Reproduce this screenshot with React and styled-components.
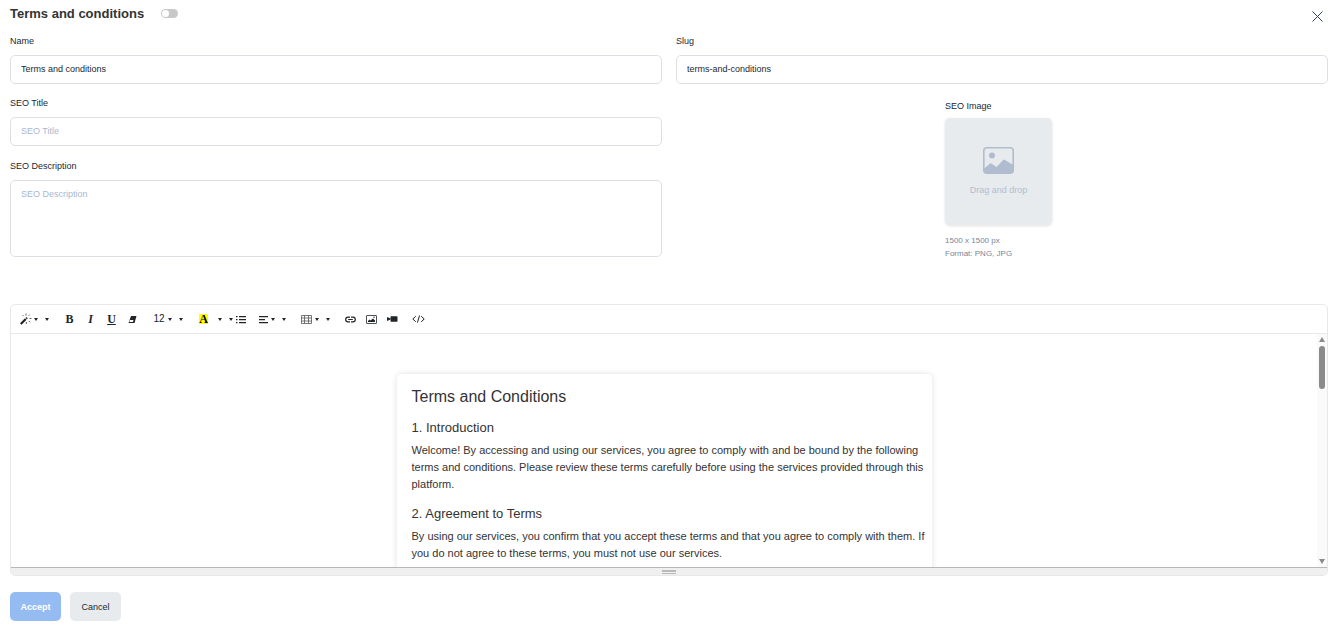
import React, {useState} from 'react';
import styled, {createGlobalStyle, css} from 'styled-components';

const GlobalStyle = createGlobalStyle`
  * {
    box-sizing: border-box;
  }
  body {
    margin: 0;
    background: #fff;
    color: #212832;
    font-family: 'Liberation Sans', Arial, sans-serif;
    font-size: 9px;
    line-height: 14px;
  }
  button,
  input,
  textarea {
    font: inherit;
    color: inherit;
    margin: 0;
  }
`;

const Page = styled.form`
  padding: 4px 8px 4px 10px;
`;

const Header = styled.header`
  display: flex;
  align-items: flex-start;
  height: 30px;
`;

const Title = styled.h1`
  margin: 0 17px 0 0;
  font-size: 13px;
  line-height: 20px;
  color: #333;
`;

const Switch = styled.input`
  appearance: none;
  width: 17px;
  height: 9px;
  margin: 5px auto 0 0;
  border-radius: 5px;
  background: #c8c8c8;
  cursor: pointer;

  &::before {
    content: '';
    display: block;
    width: 7px;
    height: 7px;
    margin: 1px;
    border-radius: 50%;
    background: #fff;
  }
  &:checked {
    background: #94bdf2;
  }
  &:checked::before {
    margin-left: 9px;
  }
`;

const CloseButton = styled.button`
  display: flex;
  padding: 5px;
  margin-top: 2px;
  border: 0;
  background: none;
  color: #34405a;
  cursor: pointer;
`;

const Columns = styled.div`
  display: grid;
  grid-template-columns: 1fr 1fr;
  column-gap: 14px;
`;

const SeoColumn = styled.div`
  display: grid;
  row-gap: 1px;
`;

const Field = styled.div`
  display: flex;
  flex-direction: column;
  gap: 7px;
  margin-bottom: 12px;
`;

const control = css`
  width: 100%;
  padding: 6px 10px;
  border: 1px solid #dcdfe3;
  border-radius: 5px;
  background: #fff;
  outline: none;

  &::placeholder {
    color: #a9b7cf;
    opacity: 1;
  }
  &:focus {
    border-color: #94bdf2;
  }
`;

const Input = styled.input`
  ${control}
  height: 29px;
  padding: 5px 10px 7px;
`;

const TextArea = styled.textarea`
  ${control}
  display: block;
  height: 77px;
  resize: none;
`;

const ImageColumn = styled.div`
  display: flex;
  flex-direction: column;
  justify-self: center;
  width: 107px;
  margin: 3px 7px 0 0;
`;

const DropZone = styled.button`
  display: flex;
  flex-direction: column;
  align-items: center;
  justify-content: center;
  gap: 9px;
  height: 107px;
  margin: 5px 0 9px;
  border: 0;
  border-radius: 5px;
  background: #e7ebee;
  box-shadow: 0 1px 3px rgba(0, 0, 0, 0.12);
  color: #b0bdd0;
  cursor: pointer;
`;

const Hint = styled.small`
  font-size: 8px;
  line-height: 13px;
  color: #77859b;
`;

const Editor = styled.section`
  margin-top: 35px;
  border: 1px solid #e6e9ec;
  border-radius: 5px;
  overflow: hidden;
`;

const Toolbar = styled.div`
  display: flex;
  align-items: center;
  gap: 6px;
  height: 29px;
  padding: 0 6px;
  border-bottom: 1px solid #e6e9ec;
`;

const Group = styled.div`
  display: flex;
`;

const ToolButton = styled.button`
  display: flex;
  align-items: center;
  justify-content: center;
  gap: 2px;
  height: 20px;
  width: ${(p) => (p.$icon ? '21px' : 'auto')};
  padding: 0 ${(p) => (p.$icon ? 0 : p.$arrow ? 4 : 3)}px;
  border: 0;
  background: none;
  color: #212529;
  cursor: pointer;
`;

const Slot = styled.span`
  display: flex;
  justify-content: center;
  width: ${(p) => p.$width}px;
  font-size: 10px;
`;

const Caret = styled.span`
  border-top: 3px solid #212529;
  border-left: 2px solid transparent;
  border-right: 2px solid transparent;
`;

const Letter = styled.span`
  font-family: 'Liberation Serif', serif;
  font-size: 12px;
  font-weight: 700;
  font-style: ${(p) => (p.$italic ? 'italic' : 'normal')};
  text-decoration: ${(p) => (p.$underline ? 'underline' : 'none')};
`;

const ColorLetter = styled(Letter)`
  width: 9px;
  line-height: 10px;
  background: #ff0;
  color: #000;
`;

const Editing = styled.div`
  display: flex;
  height: 233px;
`;

const Canvas = styled.div`
  flex: 1;
  padding: 40px 10px 0;
  overflow: hidden;
`;

const Sheet = styled.article`
  max-width: 535px;
  min-height: 300px;
  margin: 0 auto;
  padding: 13px 3px 13px 15px;
  border-radius: 5px;
  box-shadow: 0 0 6px rgba(0, 0, 0, 0.12);
  color: #333;

  h2,
  h3,
  p {
    margin: 0;
    font-weight: 400;
  }
  h2 {
    font-size: 16px;
    line-height: 20px;
  }
  h3 {
    margin-top: 12px;
    font-size: 13px;
    line-height: 18px;
  }
  p {
    margin-top: 5px;
    font-size: 11px;
    line-height: 17px;
  }
`;

const ScrollTrack = styled.div`
  display: flex;
  flex-direction: column;
  align-items: center;
  justify-content: space-between;
  width: 10px;
  padding: 3px 0;
  background: #fafafa;
`;

const ScrollThumb = styled.span`
  width: 6px;
  height: 43px;
  margin: 4px 0 auto;
  border-radius: 3px;
  background: #8b8b8b;
`;

const ScrollArrow = styled.span`
  border: 0 solid transparent;
  border-width: 0 3px;
  ${(p) =>
    p.$down
      ? 'border-top: 5px solid #8b8b8b;'
      : 'border-bottom: 5px solid #8b8b8b;'}
`;

const StatusBar = styled.div`
  display: flex;
  flex-direction: column;
  align-items: center;
  gap: 1px;
  height: 8px;
  padding-top: 2px;
  border-top: 1px solid #b5b8ba;
  background: #f0f0f0;
  cursor: ns-resize;
`;

const ResizeLine = styled.span`
  width: 14px;
  height: ${(p) => p.$height}px;
  background: #b9b9b9;
`;

const Actions = styled.footer`
  display: flex;
  gap: 9px;
  margin-top: 16px;
`;

const ActionButton = styled.button`
  width: 51px;
  height: 29px;
  padding: 0;
  border: 0;
  border-radius: 5px;
  background: ${(p) => (p.$primary ? '#95bcf2' : '#e7ebee')};
  color: ${(p) => (p.$primary ? '#fff' : '#212832')};
  font-weight: ${(p) => (p.$primary ? 700 : 400)};
  cursor: pointer;
`;

const CloseIcon = () => (
  <svg width='11' height='11' viewBox='0 0 11 11' stroke='currentColor'>
    <path d='M.5 .5l10 10M10.5 .5l-10 10' />
  </svg>
);

const PictureIcon = () => (
  <svg width='31' height='27' viewBox='0 0 31 27' fill='currentColor'>
    <rect
      x='.8'
      y='.8'
      width='29.4'
      height='25.4'
      rx='3'
      fill='none'
      stroke='currentColor'
      strokeWidth='1.6'
    />
    <circle cx='9' cy='8.5' r='3' />
    <path d='M1 21.500l5.800-4.800q1-.7 2 0l4.700 3.300 6.600-7q.9-.8 1.900 0l8.300 5v5.200q0 3-3 3H4q-3 0-3-3z' />
  </svg>
);

const MagicIcon = () => (
  <svg width='12' height='12' viewBox='0 0 12 12' stroke='currentColor'>
    <path d='M.8 11l5-5' strokeWidth='2.200' />
    <path d='M6.200 5.600l1-1' strokeWidth='1.600' />
    <path
      d='M6 .5v2M2.500 2l1.200 1.200M9.800 1.600L8.600 2.800M9.500 5.500h2M8.800 8l1.300 1.300M6.300 9v2'
      strokeWidth='.7'
    />
  </svg>
);

const EraserIcon = () => (
  <svg width='9' height='9' viewBox='0 0 9 9'>
    <path d='M3 1h5.500L6.500 8H.5z' fill='currentColor' />
    <path d='M1.900 5h3.600l-.6 2H1.300z' fill='#fff' />
  </svg>
);

const ListIcon = () => (
  <svg width='10' height='9' viewBox='0 0 10 9' fill='currentColor'>
    <path d='M0 1h1.500v1.300H0zM3 1h7v1.300H3zM0 4h1.500v1.300H0zM3 4h7v1.300H3zM0 7h1.500v1.300H0zM3 7h7v1.300H3z' />
  </svg>
);

const AlignIcon = () => (
  <svg width='9' height='9' viewBox='0 0 9 9' fill='currentColor'>
    <path d='M0 1h9v1.300H0zM0 4h6v1.300H0zM0 7h9v1.300H0z' />
  </svg>
);

const TableIcon = () => (
  <svg width='11' height='9' viewBox='0 0 11 9' fill='none' stroke='#555'>
    <path d='M.5 .5h10v8H.5zM3.500 .5v8M7.500 .5v8M.5 3h10M.5 6h10' strokeWidth='.8' />
  </svg>
);

const LinkIcon = () => (
  <svg width='11' height='7' viewBox='0 0 11 7' fill='none' stroke='currentColor'>
    <path
      d='M5 1.200H3a2.300 2.300 0 000 4.600h2M6 1.200h2a2.300 2.300 0 010 4.600H6M3.200 3.500h4.600'
      strokeWidth='1.200'
    />
  </svg>
);

const ImageIcon = () => (
  <svg width='11' height='9' viewBox='0 0 11 9' fill='currentColor'>
    <rect x='.5' y='.5' width='10' height='8' rx='.4' fill='none' stroke='currentColor' strokeWidth='.8' />
    <path d='M2 7V6l1.500-1.500 1 1L7 3.500l2 2V7z' />
    <circle cx='8' cy='2.300' r='.7' />
  </svg>
);

const VideoIcon = () => (
  <svg width='11' height='6' viewBox='0 0 11 6' fill='currentColor'>
    <path d='M0 1l3.500 1.500v1L0 5z' />
    <rect x='3.500' y='.3' width='7' height='5.400' rx='.6' />
  </svg>
);

const CodeIcon = () => (
  <svg width='13' height='8' viewBox='0 0 13 8' fill='none' stroke='currentColor'>
    <path d='M3.800 1.200L.8 4l3 2.800M9.200 1.200l3 2.800-3 2.800M7.500 .5l-2 7' />
  </svg>
);

const Tool = ({label, children}) => (
  <ToolButton type='button' aria-label={label} $icon>
    {children}
  </ToolButton>
);

const DropTool = ({label, width, children}) => (
  <ToolButton type='button' aria-label={label}>
    <Slot $width={width}>{children}</Slot>
    <Caret />
  </ToolButton>
);

const ArrowTool = ({label}) => (
  <ToolButton type='button' aria-label={label} $arrow>
    <Caret />
  </ToolButton>
);

const EditorToolbar = () => (
  <Toolbar role='toolbar'>
    <Group>
      <DropTool label='Style' width={12}>
        <MagicIcon />
      </DropTool>
      <ArrowTool label='More styles' />
    </Group>
    <Group>
      <Tool label='Bold'>
        <Letter>B</Letter>
      </Tool>
      <Tool label='Italic'>
        <Letter $italic>I</Letter>
      </Tool>
      <Tool label='Underline'>
        <Letter $underline>U</Letter>
      </Tool>
      <Tool label='Remove font style'>
        <EraserIcon />
      </Tool>
    </Group>
    <Group>
      <DropTool label='Font size' width={14}>
        12
      </DropTool>
      <ArrowTool label='More sizes' />
    </Group>
    <Group>
      <Tool label='Recent color'>
        <ColorLetter>A</ColorLetter>
      </Tool>
      <ArrowTool label='More colors' />
      <ToolButton type='button' aria-label='Unordered list'>
        <Caret />
        <Slot $width={11}>
          <ListIcon />
        </Slot>
      </ToolButton>
    </Group>
    <Group>
      <DropTool label='Paragraph' width={11}>
        <AlignIcon />
      </DropTool>
      <ArrowTool label='More paragraph options' />
    </Group>
    <Group>
      <DropTool label='Table' width={14}>
        <TableIcon />
      </DropTool>
      <ArrowTool label='More table options' />
    </Group>
    <Group>
      <Tool label='Link'>
        <LinkIcon />
      </Tool>
      <Tool label='Picture'>
        <ImageIcon />
      </Tool>
      <Tool label='Video'>
        <VideoIcon />
      </Tool>
    </Group>
    <Group>
      <ToolButton type='button' aria-label='Code view'>
        <CodeIcon />
      </ToolButton>
    </Group>
  </Toolbar>
);

const App = () => {
  const [active, setActive] = useState(false);
  const [data, setData] = useState({
    name: 'Terms and conditions',
    slug: 'terms-and-conditions',
    seoTitle: '',
    seoDescription: '',
  });

  const onChange = (e) => setData({...data, [e.target.name]: e.target.value});

  return (
    <>
      <GlobalStyle />
      <Page onSubmit={(e) => e.preventDefault()}>
        <Header>
          <Title>Terms and conditions</Title>
          <Switch
            type='checkbox'
            role='switch'
            aria-label='Active'
            checked={active}
            onChange={(e) => setActive(e.target.checked)}
          />
          <CloseButton type='button' aria-label='Close'>
            <CloseIcon />
          </CloseButton>
        </Header>

        <Columns>
          <Field>
            <label htmlFor='name'>Name</label>
            <Input id='name' name='name' value={data.name} onChange={onChange} />
          </Field>
          <Field>
            <label htmlFor='slug'>Slug</label>
            <Input id='slug' name='slug' value={data.slug} onChange={onChange} />
          </Field>
          <SeoColumn>
            <Field>
              <label htmlFor='seoTitle'>SEO Title</label>
              <Input
                id='seoTitle'
                name='seoTitle'
                placeholder='SEO Title'
                value={data.seoTitle}
                onChange={onChange}
              />
            </Field>
            <Field>
              <label htmlFor='seoDescription'>SEO Description</label>
              <TextArea
                id='seoDescription'
                name='seoDescription'
                placeholder='SEO Description'
                value={data.seoDescription}
                onChange={onChange}
              />
            </Field>
          </SeoColumn>
          <ImageColumn>
            <span>SEO Image</span>
            <DropZone type='button'>
              <PictureIcon />
              Drag and drop
            </DropZone>
            <Hint>1500 x 1500 px</Hint>
            <Hint>Format: PNG, JPG</Hint>
          </ImageColumn>
        </Columns>

        <Editor>
          <EditorToolbar />
          <Editing>
            <Canvas>
              <Sheet>
                <h2>Terms and Conditions</h2>
                <h3>1. Introduction</h3>
                <p>
                  Welcome! By accessing and using our services, you agree to
                  comply with and be bound by the following terms and
                  conditions. Please review these terms carefully before using
                  the services provided through this platform.
                </p>
                <h3>2. Agreement to Terms</h3>
                <p>
                  By using our services, you confirm that you accept these terms
                  and that you agree to comply with them. If you do not agree to
                  these terms, you must not use our services.
                </p>
              </Sheet>
            </Canvas>
            <ScrollTrack>
              <ScrollArrow />
              <ScrollThumb />
              <ScrollArrow $down />
            </ScrollTrack>
          </Editing>
          <StatusBar>
            <ResizeLine $height={2} />
            <ResizeLine $height={1} />
          </StatusBar>
        </Editor>

        <Actions>
          <ActionButton type='submit' $primary>
            Accept
          </ActionButton>
          <ActionButton type='button'>Cancel</ActionButton>
        </Actions>
      </Page>
    </>
  );
};

export default App;
